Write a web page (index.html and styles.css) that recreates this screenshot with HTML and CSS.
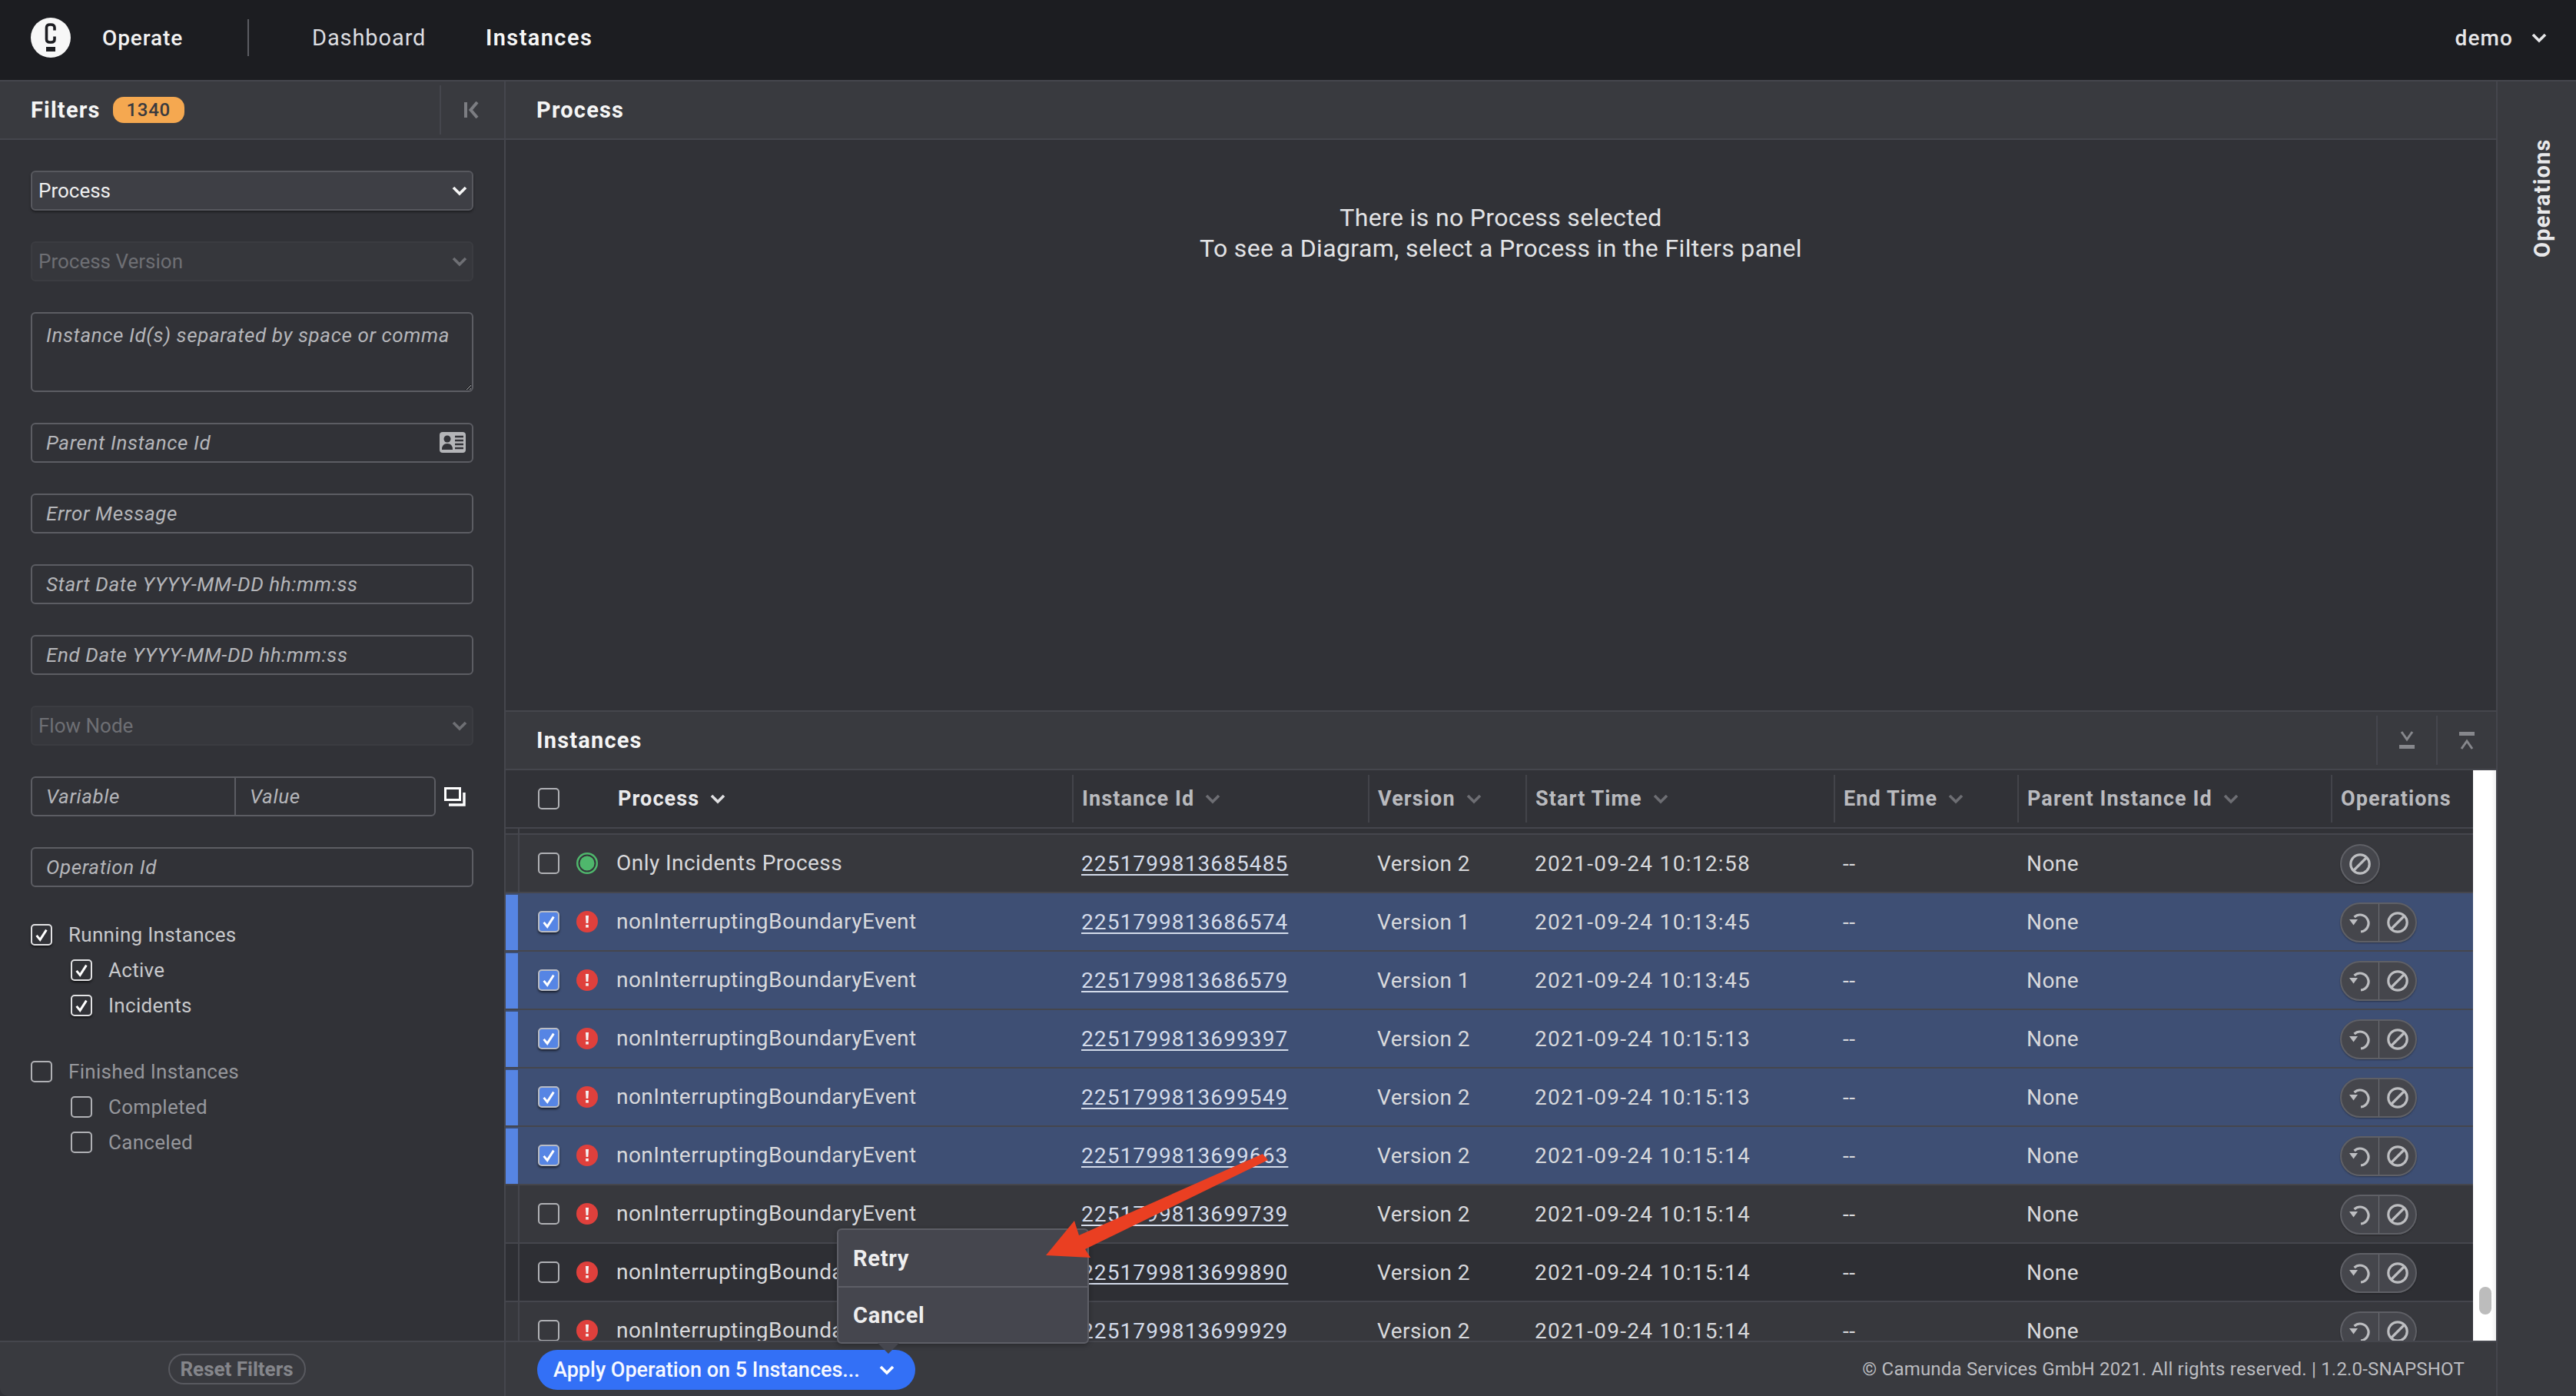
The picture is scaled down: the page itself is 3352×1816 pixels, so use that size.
FILE: index.html
```html
<!DOCTYPE html>
<html lang="en">

<head>
    <meta charset="UTF-8" />
    <title>Camunda Operate</title>
    <link rel="stylesheet" href="styles.css">
</head>

<body>
    <svg class="icon-defs" xmlns="http://www.w3.org/2000/svg">
        <symbol id="i-chevron" viewBox="0 0 20 14">
            <path d="M2 3l8 8 8-8" fill="none" stroke="currentColor" stroke-width="3.6" />
        </symbol>
        <symbol id="i-check" viewBox="0 0 24 24">
            <path d="M5 13l5 6L19 5" fill="none" stroke="currentColor" stroke-width="3.2" />
        </symbol>
        <symbol id="i-incident" viewBox="0 0 28 28">
            <circle cx="14" cy="14" r="14" fill="#df403c" />
            <path d="M12 6h4l-.6 10h-2.800z" fill="#f4f4f4" />
            <rect x="12.200" y="18" width="3.600" height="3.600" fill="#f4f4f4" />
        </symbol>
        <symbol id="i-active" viewBox="0 0 28 28">
            <circle cx="14" cy="14" r="14" fill="#4fb76c" />
            <circle cx="14" cy="14" r="10.500" fill="none" stroke="#33343a" stroke-width="2" />
        </symbol>
        <symbol id="i-retry" viewBox="0 0 28 28">
            <path d="M6.500 7A11 11 0 1 1 15 26" fill="none" stroke="currentColor" stroke-width="3.200" />
            <path d="M0 10h11l-5.500 7.500z" fill="currentColor" />
        </symbol>
        <symbol id="i-cancel" viewBox="0 0 28 28">
            <circle cx="14" cy="14" r="12.200" fill="none" stroke="currentColor" stroke-width="3.200" />
            <path d="M6 22L22 6" stroke="currentColor" stroke-width="3.200" />
        </symbol>
    </svg>

    <div class="app">
        <header class="topbar">
            <svg class="logo" viewBox="0 0 52 52">
                <circle cx="26" cy="26" r="26" fill="#f7f7f7" />
                <path d="M31 16.500V13q0-4-4.500-4h-1.500q-4.500 0-4.500 4v15q0 4 4.500 4h1.500q4.500 0 4.500-4v-3.500" fill="none" stroke="#1c1d21" stroke-width="3.600" />
                <rect x="20" y="38" width="12" height="6" fill="#1c1d21" />
            </svg>
            <span class="brand">Operate</span>
            <span class="topbar-sep"></span>
            <nav class="topnav">
                <a class="topnav-link">Dashboard</a>
                <a class="topnav-link active">Instances</a>
            </nav>
            <div class="user">
                <span>demo</span>
                <svg class="user-chevron"><use href="#i-chevron" /></svg>
            </div>
        </header>

        <main class="workspace">
            <aside class="filters">
                <div class="panel-head filters-head">
                    <span class="panel-title">Filters</span>
                    <span class="count-badge">1340</span>
                    <button class="collapse-btn">
                        <svg viewBox="0 0 20 22" width="20" height="22">
                            <rect x="0" y="1" width="4" height="20" fill="currentColor" />
                            <path d="M17 1L8.500 11 17 21" fill="none" stroke="currentColor" stroke-width="4" />
                        </svg>
                    </button>
                </div>

                <form class="filters-form">
                    <div class="select-wrap">
                        <select class="field-select"><option>Process</option></select>
                        <svg class="select-chevron"><use href="#i-chevron" /></svg>
                    </div>
                    <div class="select-wrap disabled">
                        <select class="field-select" disabled><option>Process Version</option></select>
                        <svg class="select-chevron"><use href="#i-chevron" /></svg>
                    </div>
                    <textarea class="field field-area" placeholder="Instance Id(s) separated by space or comma"></textarea>
                    <div class="input-wrap">
                        <input class="field" placeholder="Parent Instance Id">
                        <svg class="input-icon" viewBox="0 0 34 27" width="34" height="27">
                            <rect width="34" height="27" rx="4" fill="#b4b5b8" />
                            <circle cx="10" cy="9" r="4.500" fill="#313237" />
                            <path d="M3 23q0-8 7-8t7 8z" fill="#313237" />
                            <path d="M20 6h11M20 11h11M20 16h11M20 21h11" stroke="#313237" stroke-width="2.400" />
                        </svg>
                    </div>
                    <input class="field" placeholder="Error Message">
                    <input class="field" placeholder="Start Date YYYY-MM-DD hh:mm:ss">
                    <input class="field" placeholder="End Date YYYY-MM-DD hh:mm:ss">
                    <div class="select-wrap disabled">
                        <select class="field-select" disabled><option>Flow Node</option></select>
                        <svg class="select-chevron"><use href="#i-chevron" /></svg>
                    </div>
                    <div class="variable-row">
                        <div class="variable-inputs">
                            <input class="field variable-name" placeholder="Variable">
                            <input class="field variable-value" placeholder="Value">
                        </div>
                        <svg class="variable-icon" viewBox="0 0 28 25" width="28" height="25">
                            <rect x="1.500" y="1.500" width="19" height="15" fill="none" stroke="#fff" stroke-width="3" />
                            <path d="M26 7v16H6" fill="none" stroke="#fff" stroke-width="3.400" />
                        </svg>
                    </div>
                    <input class="field" placeholder="Operation Id">

                    <div class="state-groups">
                        <div class="state-group">
                            <label class="state on"><span class="checkbox checked"><svg><use href="#i-check" /></svg></span>Running Instances</label>
                            <label class="state on sub"><span class="checkbox checked"><svg><use href="#i-check" /></svg></span>Active</label>
                            <label class="state on sub"><span class="checkbox checked"><svg><use href="#i-check" /></svg></span>Incidents</label>
                        </div>
                        <div class="state-group">
                            <label class="state"><span class="checkbox"></span>Finished Instances</label>
                            <label class="state sub"><span class="checkbox"></span>Completed</label>
                            <label class="state sub"><span class="checkbox"></span>Canceled</label>
                        </div>
                    </div>
                </form>

                <div class="filters-foot">
                    <button class="reset-btn">Reset Filters</button>
                </div>
            </aside>

            <section class="center">
                <section class="diagram">
                    <div class="panel-head"><span class="panel-title">Process</span></div>
                    <div class="diagram-empty">
                        <p>There is no Process selected</p>
                        <p>To see a Diagram, select a Process in the Filters panel</p>
                    </div>
                </section>

                <section class="instances">
                    <div class="panel-head instances-head">
                        <span class="panel-title">Instances</span>
                        <div class="head-actions">
                            <button class="head-btn">
                                <svg viewBox="0 0 20 24" width="20" height="24">
                                    <path d="M3 1l7 10 7-10" fill="none" stroke="currentColor" stroke-width="3" />
                                    <rect x="0" y="18" width="20" height="5" fill="currentColor" />
                                </svg>
                            </button>
                            <button class="head-btn">
                                <svg viewBox="0 0 20 24" width="20" height="24">
                                    <rect x="0" y="1" width="20" height="5" fill="currentColor" />
                                    <path d="M3 23l7-10 7 10" fill="none" stroke="currentColor" stroke-width="3" />
                                </svg>
                            </button>
                        </div>
                    </div>

                    <div class="table-wrap">
                        <div class="table">
                            <div class="table-row table-header">
                                <div class="th th-process"><span class="checkbox"></span><span class="sorted">Process</span><svg class="sort-icon sorted"><use href="#i-chevron" /></svg></div>
                                <div class="th">Instance Id<svg class="sort-icon"><use href="#i-chevron" /></svg></div>
                                <div class="th">Version<svg class="sort-icon"><use href="#i-chevron" /></svg></div>
                                <div class="th">Start Time<svg class="sort-icon"><use href="#i-chevron" /></svg></div>
                                <div class="th">End Time<svg class="sort-icon"><use href="#i-chevron" /></svg></div>
                                <div class="th">Parent Instance Id<svg class="sort-icon"><use href="#i-chevron" /></svg></div>
                                <div class="th">Operations</div>
                            </div>
                            <div class="table-gap"><span class="row-marker"></span></div>

                            <div class="table-row row-odd">
                                <div class="td td-process"><span class="row-marker"></span><span class="checkbox"></span><svg class="status"><use href="#i-active" /></svg>Only Incidents Process</div>
                                <div class="td"><a class="id-link">2251799813685485</a></div>
                                <div class="td">Version 2</div>
                                <div class="td">2021-09-24 10:12:58</div>
                                <div class="td">--</div>
                                <div class="td">None</div>
                                <div class="td"><div class="ops"><span class="op-btn"><svg class="op-icon"><use href="#i-cancel" /></svg></span></div></div>
                            </div>

                            <div class="table-row row-selected">
                                <div class="td td-process"><span class="row-marker"></span><span class="checkbox checked"><svg><use href="#i-check" /></svg></span><svg class="status"><use href="#i-incident" /></svg>nonInterruptingBoundaryEvent</div>
                                <div class="td"><a class="id-link">2251799813686574</a></div>
                                <div class="td">Version 1</div>
                                <div class="td">2021-09-24 10:13:45</div>
                                <div class="td">--</div>
                                <div class="td">None</div>
                                <div class="td"><div class="ops"><span class="op-btn"><svg class="op-icon"><use href="#i-retry" /></svg></span><span class="op-btn"><svg class="op-icon"><use href="#i-cancel" /></svg></span></div></div>
                            </div>

                            <div class="table-row row-selected">
                                <div class="td td-process"><span class="row-marker"></span><span class="checkbox checked"><svg><use href="#i-check" /></svg></span><svg class="status"><use href="#i-incident" /></svg>nonInterruptingBoundaryEvent</div>
                                <div class="td"><a class="id-link">2251799813686579</a></div>
                                <div class="td">Version 1</div>
                                <div class="td">2021-09-24 10:13:45</div>
                                <div class="td">--</div>
                                <div class="td">None</div>
                                <div class="td"><div class="ops"><span class="op-btn"><svg class="op-icon"><use href="#i-retry" /></svg></span><span class="op-btn"><svg class="op-icon"><use href="#i-cancel" /></svg></span></div></div>
                            </div>

                            <div class="table-row row-selected">
                                <div class="td td-process"><span class="row-marker"></span><span class="checkbox checked"><svg><use href="#i-check" /></svg></span><svg class="status"><use href="#i-incident" /></svg>nonInterruptingBoundaryEvent</div>
                                <div class="td"><a class="id-link">2251799813699397</a></div>
                                <div class="td">Version 2</div>
                                <div class="td">2021-09-24 10:15:13</div>
                                <div class="td">--</div>
                                <div class="td">None</div>
                                <div class="td"><div class="ops"><span class="op-btn"><svg class="op-icon"><use href="#i-retry" /></svg></span><span class="op-btn"><svg class="op-icon"><use href="#i-cancel" /></svg></span></div></div>
                            </div>

                            <div class="table-row row-selected">
                                <div class="td td-process"><span class="row-marker"></span><span class="checkbox checked"><svg><use href="#i-check" /></svg></span><svg class="status"><use href="#i-incident" /></svg>nonInterruptingBoundaryEvent</div>
                                <div class="td"><a class="id-link">2251799813699549</a></div>
                                <div class="td">Version 2</div>
                                <div class="td">2021-09-24 10:15:13</div>
                                <div class="td">--</div>
                                <div class="td">None</div>
                                <div class="td"><div class="ops"><span class="op-btn"><svg class="op-icon"><use href="#i-retry" /></svg></span><span class="op-btn"><svg class="op-icon"><use href="#i-cancel" /></svg></span></div></div>
                            </div>

                            <div class="table-row row-selected">
                                <div class="td td-process"><span class="row-marker"></span><span class="checkbox checked"><svg><use href="#i-check" /></svg></span><svg class="status"><use href="#i-incident" /></svg>nonInterruptingBoundaryEvent</div>
                                <div class="td"><a class="id-link">2251799813699663</a></div>
                                <div class="td">Version 2</div>
                                <div class="td">2021-09-24 10:15:14</div>
                                <div class="td">--</div>
                                <div class="td">None</div>
                                <div class="td"><div class="ops"><span class="op-btn"><svg class="op-icon"><use href="#i-retry" /></svg></span><span class="op-btn"><svg class="op-icon"><use href="#i-cancel" /></svg></span></div></div>
                            </div>

                            <div class="table-row row-odd">
                                <div class="td td-process"><span class="row-marker"></span><span class="checkbox"></span><svg class="status"><use href="#i-incident" /></svg>nonInterruptingBoundaryEvent</div>
                                <div class="td"><a class="id-link">2251799813699739</a></div>
                                <div class="td">Version 2</div>
                                <div class="td">2021-09-24 10:15:14</div>
                                <div class="td">--</div>
                                <div class="td">None</div>
                                <div class="td"><div class="ops"><span class="op-btn"><svg class="op-icon"><use href="#i-retry" /></svg></span><span class="op-btn"><svg class="op-icon"><use href="#i-cancel" /></svg></span></div></div>
                            </div>

                            <div class="table-row row-even">
                                <div class="td td-process"><span class="row-marker"></span><span class="checkbox"></span><svg class="status"><use href="#i-incident" /></svg>nonInterruptingBoundaryEvent</div>
                                <div class="td"><a class="id-link">2251799813699890</a></div>
                                <div class="td">Version 2</div>
                                <div class="td">2021-09-24 10:15:14</div>
                                <div class="td">--</div>
                                <div class="td">None</div>
                                <div class="td"><div class="ops"><span class="op-btn"><svg class="op-icon"><use href="#i-retry" /></svg></span><span class="op-btn"><svg class="op-icon"><use href="#i-cancel" /></svg></span></div></div>
                            </div>

                            <div class="table-row row-odd">
                                <div class="td td-process"><span class="row-marker"></span><span class="checkbox"></span><svg class="status"><use href="#i-incident" /></svg>nonInterruptingBoundaryEvent</div>
                                <div class="td"><a class="id-link">2251799813699929</a></div>
                                <div class="td">Version 2</div>
                                <div class="td">2021-09-24 10:15:14</div>
                                <div class="td">--</div>
                                <div class="td">None</div>
                                <div class="td"><div class="ops"><span class="op-btn"><svg class="op-icon"><use href="#i-retry" /></svg></span><span class="op-btn"><svg class="op-icon"><use href="#i-cancel" /></svg></span></div></div>
                            </div>
                        </div>
                        <div class="scroll-track"><span class="scroll-thumb"></span></div>
                    </div>

                    <div class="instances-foot">
                        <div class="apply-wrap">
                            <div class="apply-menu">
                                <div class="apply-item">Retry</div>
                                <div class="apply-item">Cancel</div>
                            </div>
                            <button class="apply-btn">Apply Operation on 5 Instances...<svg class="apply-chevron"><use href="#i-chevron" /></svg></button>
                        </div>
                        <span class="copyright">© Camunda Services GmbH 2021. All rights reserved. | 1.2.0-SNAPSHOT</span>
                    </div>
                </section>
            </section>

            <aside class="operations">
                <span class="operations-title">Operations</span>
            </aside>
        </main>

        <!-- red annotation arrow drawn over the screenshot -->
        <svg class="annotation" viewBox="0 0 3352 1816">
            <path d="M1643 1501L1650 1509 1412 1625 1419 1636 1361 1633 1398 1588 1404 1607z" fill="#ea3f22" />
        </svg>
    </div>
</body>

</html>
```

FILE: styles.css
```css
* {
    box-sizing: border-box;
}

html,
body {
    margin: 0;
    padding: 0;
    height: 100%;
    overflow: hidden;
    background: #1c1d21;
}

body {
    font-family: 'Roboto', 'Noto Sans', sans-serif;
    font-size: 28px;
    letter-spacing: 0.7px;
    color: #d8d9dc;
}

.icon-defs {
    display: none;
}

.app {
    position: relative;
    height: 1816px;
    display: flex;
    flex-direction: column;
}

/* top bar */
.topbar {
    height: 106px;
    flex: none;
    display: flex;
    align-items: center;
    padding: 0 38px 6px 40px;
    background: #1c1d21;
    border-bottom: 2px solid #45464d;
}

.logo {
    width: 52px;
    height: 52px;
    flex: none;
}

.brand {
    width: 114px;
    margin-left: 41px;
    color: #f2f2f2;
    font-weight: 500;
    letter-spacing: 0.9px;
}

.topbar-sep {
    width: 2px;
    height: 48px;
    margin-left: 75px;
    background: #5b5c62;
}

.topnav {
    display: flex;
    margin-left: 82px;
}

.topnav-link {
    width: 226px;
    font-size: 29px;
    letter-spacing: 0.9px;
    color: #dcdde0;
}

.topnav-link.active {
    color: #f5f5f5;
    font-weight: 600;
    letter-spacing: 1.4px;
}

.user {
    margin-left: auto;
    display: flex;
    align-items: center;
    gap: 24px;
    color: #e6e6e8;
    font-weight: 500;
    letter-spacing: 1.1px;
}

.user-chevron {
    width: 20px;
    height: 14px;
    color: #e6e6e8;
}

/* layout */
.workspace {
    flex: 1;
    display: flex;
    min-height: 0;
}

.panel-head {
    height: 76px;
    flex: none;
    display: flex;
    align-items: center;
    padding-left: 40px;
    background: #393a3f;
    border-bottom: 2px solid #45464d;
}

.panel-title {
    color: #f5f5f5;
    font-weight: 700;
    font-size: 29px;
    letter-spacing: 1.2px;
}

/* filters */
.filters {
    width: 658px;
    flex: none;
    display: flex;
    flex-direction: column;
    background: #313237;
    border-right: 2px solid #45464d;
}

.count-badge {
    width: 93px;
    height: 34px;
    margin-left: 16px;
    display: flex;
    align-items: center;
    justify-content: center;
    border-radius: 14px;
    background: #f5a850;
    color: #393a3f;
    font-size: 24px;
    font-weight: 500;
}

.collapse-btn {
    margin-left: auto;
    width: 84px;
    height: 64px;
    padding: 0 0 0 30px;
    display: flex;
    align-items: center;
    background: none;
    border: 0;
    border-left: 2px solid #45464d;
    color: #7c7d82;
}

.filters-form {
    flex: 1;
    display: flex;
    flex-direction: column;
    gap: 40px;
    padding: 40px 40px 0 40px;
}

.select-wrap,
.input-wrap {
    position: relative;
}

.field-select {
    display: block;
    width: 100%;
    height: 52px;
    padding: 0 8px;
    appearance: none;
    font: inherit;
    font-size: 26px;
    letter-spacing: 0;
    color: #f0f0f0;
    background: #3e3f45;
    border: 2px solid #57585e;
    border-radius: 6px;
    box-shadow: 0 2px 3px rgba(0, 0, 0, 0.4);
    opacity: 1;
}

.select-wrap.disabled .field-select {
    color: #6e6f74;
    background: #36373c;
    border-color: #3b3c41;
    box-shadow: none;
}

.select-chevron {
    position: absolute;
    right: 8px;
    top: 19px;
    width: 20px;
    height: 14px;
    color: #f5f5f5;
    pointer-events: none;
}

.select-wrap.disabled .select-chevron {
    color: #6e6f74;
}

.field {
    display: block;
    width: 100%;
    height: 52px;
    padding: 0 18px;
    font: inherit;
    font-size: 26px;
    letter-spacing: 0.6px;
    color: #f0f0f0;
    background: #313237;
    border: 2px solid #5c5d63;
    border-radius: 6px;
    outline: none;
}

.field::placeholder {
    color: #b5b6ba;
    font-style: italic;
    opacity: 1;
}

.field-area {
    height: 104px;
    padding-top: 12px;
    line-height: 32px;
    resize: vertical;
}

.input-icon {
    position: absolute;
    right: 10px;
    top: 12px;
}

.variable-row {
    display: flex;
    align-items: center;
    gap: 11px;
}

.variable-inputs {
    width: 527px;
    display: flex;
}

.variable-name {
    width: 266px;
    border-radius: 6px 0 0 6px;
    border-right-width: 1px;
}

.variable-value {
    flex: 1;
    width: 0;
    border-radius: 0 6px 6px 0;
    border-left-width: 1px;
}

.variable-icon {
    flex: none;
}

.state-groups {
    display: flex;
    flex-direction: column;
    gap: 58px;
    margin-top: 8px;
}

.state-group {
    display: flex;
    flex-direction: column;
    gap: 18px;
}

.state {
    display: flex;
    align-items: center;
    gap: 21px;
    height: 28px;
    font-size: 26px;
    letter-spacing: 0.3px;
    color: #96979c;
}

.state.on {
    color: #c8c9cc;
}

.state.sub {
    margin-left: 52px;
}

.filters-foot {
    height: 72px;
    flex: none;
    display: flex;
    align-items: center;
    justify-content: center;
    padding-right: 40px;
    background: #393a3f;
    border-top: 2px solid #45464d;
    border-bottom-left-radius: 10px;
}

.reset-btn {
    width: 179px;
    height: 40px;
    padding: 0;
    font: inherit;
    font-size: 26px;
    font-weight: 700;
    color: #85868b;
    background: none;
    border: 2px solid #58595f;
    border-radius: 20px;
}

/* checkboxes */
.checkbox {
    width: 28px;
    height: 28px;
    flex: none;
    display: flex;
    align-items: center;
    justify-content: center;
    border: 2px solid #b0b1b5;
    border-radius: 5px;
}

.checkbox svg {
    width: 22px;
    height: 22px;
    color: #fff;
}

.checkbox.checked {
    border-color: #e2e2e4;
    box-shadow: 0 2px 3px rgba(0, 0, 0, 0.6);
}

/* center */
.center {
    flex: 1;
    min-width: 0;
    display: flex;
    flex-direction: column;
}

.diagram {
    flex: 1;
    min-height: 0;
    display: flex;
    flex-direction: column;
    background: #313237;
    border-bottom: 2px solid #45464d;
}

.diagram-empty {
    padding-top: 81px;
    text-align: center;
    color: #e2e3e5;
    font-size: 32px;
    letter-spacing: 0.36px;
    line-height: 40px;
}

.diagram-empty p {
    margin: 0;
}

.instances {
    height: 892px;
    flex: none;
    display: flex;
    flex-direction: column;
    margin-top: -2px;
    border-top: 2px solid #45464d;
}

.head-actions {
    margin-left: auto;
    display: flex;
}

.head-btn {
    width: 78px;
    height: 64px;
    padding: 0;
    display: flex;
    align-items: center;
    justify-content: center;
    background: none;
    border: 0;
    border-left: 2px solid #45464d;
    color: #86878c;
}

.table-wrap {
    flex: 1;
    min-height: 0;
    display: flex;
}

.table {
    flex: 1;
    min-width: 0;
    overflow: hidden;
    background: #313237;
}

.table-row {
    display: grid;
    grid-template-columns: 737px 385px 205px 401px 239px 408px 185px;
    height: 76px;
    border-bottom: 2px solid #45464d;
}

.th {
    align-self: center;
    height: 62px;
    display: flex;
    align-items: center;
    gap: 14px;
    padding-left: 11px;
    border-left: 2px solid #43444a;
    font-weight: 700;
    font-size: 27px;
    letter-spacing: 1.1px;
    color: #b9babe;
}

.th-process {
    border-left: 0;
    padding-left: 42px;
    gap: 0;
}

.th-process .sorted {
    margin-left: 76px;
    color: #eaeaec;
}

.sort-icon {
    width: 20px;
    height: 14px;
    color: #6d6e73;
}

.sort-icon.sorted {
    margin-left: 14px;
    color: #e0e0e2;
}

.table-gap {
    height: 8px;
    border-bottom: 2px solid #45464d;
}

.table-gap .row-marker {
    display: block;
    height: 6px;
}

.td {
    display: flex;
    align-items: center;
    padding-left: 12px;
    letter-spacing: 0.45px;
    color: #d8d9dc;
}

.td:nth-child(4) {
    letter-spacing: 1.3px;
}

.td-process {
    padding-left: 0;
    align-items: stretch;
    line-height: 74px;
}

.td-process .checkbox,
.td-process .status {
    align-self: center;
}

.row-marker {
    width: 18px;
    flex: none;
    border-right: 2px solid #45464d;
}

.td-process .checkbox {
    margin-left: 24px;
}

.status {
    width: 28px;
    height: 28px;
    flex: none;
    margin-left: 22px;
    margin-right: 24px;
}

.row-odd {
    background: #37383d;
}

.row-even {
    background: #2e2f34;
}

.row-selected {
    background: #3e4f74;
}

.row-selected .row-marker {
    width: 16px;
    margin-right: 2px;
    margin-top: 2px;
    border-right: 0;
    background: #5685e4;
}

.row-selected .checkbox {
    background: #5685e4;
    border-color: #b9bcc4;
}

.id-link {
    letter-spacing: 1.1px;
    color: #d3dbea;
    text-decoration: underline;
    text-underline-offset: 4px;
}

.ops {
    height: 52px;
    display: flex;
    align-items: center;
    margin-top: 2px;
    background: #45464c;
    border: 2px solid #5f6066;
    border-radius: 26px;
    box-shadow: 0 1px 2px rgba(0, 0, 0, 0.35);
    color: #bdbec1;
}

.op-btn {
    width: 48px;
    height: 48px;
    display: flex;
    align-items: center;
    justify-content: center;
}

.op-btn + .op-btn {
    border-left: 1px solid #6f7075;
}

.op-icon {
    width: 28px;
    height: 28px;
}

.scroll-track {
    width: 30px;
    flex: none;
    padding: 672px 6px 0 8px;
    background: linear-gradient(to right, #ffffff 80%, #eeeeee);
}

.scroll-thumb {
    display: block;
    height: 36px;
    border-radius: 8px;
    background: #bcbcbc;
}

.instances-foot {
    height: 72px;
    flex: none;
    display: flex;
    align-items: center;
    justify-content: space-between;
    padding: 0 41px;
    background: #393a3f;
    border-top: 2px solid #45464d;
}

.apply-wrap {
    position: relative;
    margin-top: 2px;
}

.apply-btn {
    width: 492px;
    height: 52px;
    display: flex;
    align-items: center;
    padding: 0 0 0 21px;
    font: inherit;
    font-size: 27px;
    font-weight: 500;
    color: #f7f9ff;
    background: #3370f6;
    border: 0;
    border-radius: 26px;
}

.apply-chevron {
    width: 20px;
    height: 14px;
    margin-left: auto;
    margin-right: 27px;
    color: #fff;
}

.apply-menu {
    position: absolute;
    left: 390px;
    bottom: 60px;
    width: 328px;
    height: 150px;
    background: #45464e;
    border: 2px solid #5d5e66;
    border-radius: 6px;
    box-shadow: 0 2px 6px rgba(0, 0, 0, 0.3);
    z-index: 2;
}

.apply-menu::after {
    content: "";
    position: absolute;
    left: 51px;
    bottom: -15px;
    border-left: 14px solid transparent;
    border-right: 14px solid transparent;
    border-top: 14px solid #45464e;
}

.apply-item {
    height: 73px;
    display: flex;
    align-items: center;
    padding-left: 19px;
    font-size: 29px;
    font-weight: 700;
    color: #eeeeef;
}

.apply-item + .apply-item {
    border-top: 2px solid #5d5e66;
}

.copyright {
    font-size: 24px;
    letter-spacing: 0.2px;
    color: #bcbdc1;
}

/* right rail */
.operations {
    width: 104px;
    flex: none;
    display: flex;
    justify-content: center;
    padding: 76px 0 0 14px;
    background: #393a3f;
    border-left: 2px solid #45464d;
}

.operations-title {
    height: 153px;
    writing-mode: vertical-rl;
    transform: rotate(180deg);
    color: #e8e8ea;
    font-weight: 700;
    font-size: 29px;
    letter-spacing: 1.2px;
}

.annotation {
    position: absolute;
    inset: 0;
    width: 3352px;
    height: 1816px;
    pointer-events: none;
    z-index: 5;
}
```
